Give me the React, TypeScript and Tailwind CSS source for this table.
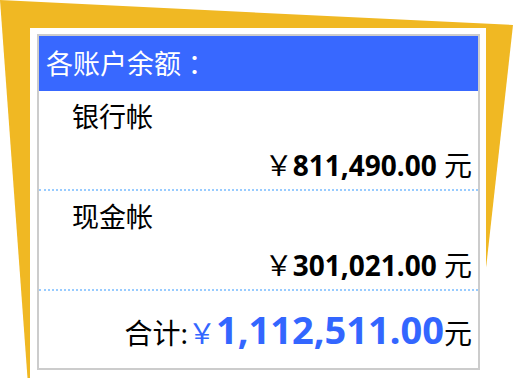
import React from "react";

const FONT = "'Noto Sans', 'Noto Sans CJK SC', sans-serif";

function AccountRow({ label, amount }: { label: string; amount: string }) {
  return (
    <div className="h-[100px] border-b-2 border-dotted border-[#99ccff]">
      <div className="h-[51px] pl-[33px] text-[27px] leading-[51px] text-black">{label}</div>
      <div className="h-[47px] pr-[6px] text-right text-[28px] leading-[47px] text-black whitespace-nowrap">
        <span>￥</span>
        <span className="font-bold">{amount}</span>
        <span> 元</span>
      </div>
    </div>
  );
}

export default function App() {
  return (
    <div
      className="relative w-[513px] h-[378px] overflow-hidden bg-white pt-[28px] pl-[30px]"
      style={{ fontFamily: FONT }}
    >
      <svg className="absolute left-0 top-0" width={513} height={378} viewBox="0 0 513 378">
        <polygon fill="#f0b823" points="0,0 513,25 486.5,264 470,378 27.5,378" />
      </svg>
      <div className="relative w-[456px] h-[350px] bg-white pl-[7px] pr-[6px] pt-[6px]">
        <div className="h-[336px] border-2 border-[#cccccc]">
          <div className="h-[55px] bg-[#3868ff] flex items-center pl-[7px] text-[27px] leading-none text-white whitespace-nowrap">
            <span>各账户余额</span>
            <span className="font-['Noto_Sans_CJK_JP',sans-serif]">：</span>
          </div>
          <AccountRow label="银行帐" amount="811,490.00" />
          <AccountRow label="现金帐" amount="301,021.00" />
          <div className="h-[77px] pt-[19px] pr-[6px] flex justify-end items-baseline whitespace-nowrap">
            <span className="text-[28px] leading-none text-black">合计:</span>
            <span className="text-[28px] leading-none text-[#3366ff]">￥</span>
            <span className="text-[38px] leading-none font-bold text-[#3366ff]">1,112,511.00</span>
            <span className="text-[28px] leading-none text-black">元</span>
          </div>
        </div>
      </div>
    </div>
  );
}
